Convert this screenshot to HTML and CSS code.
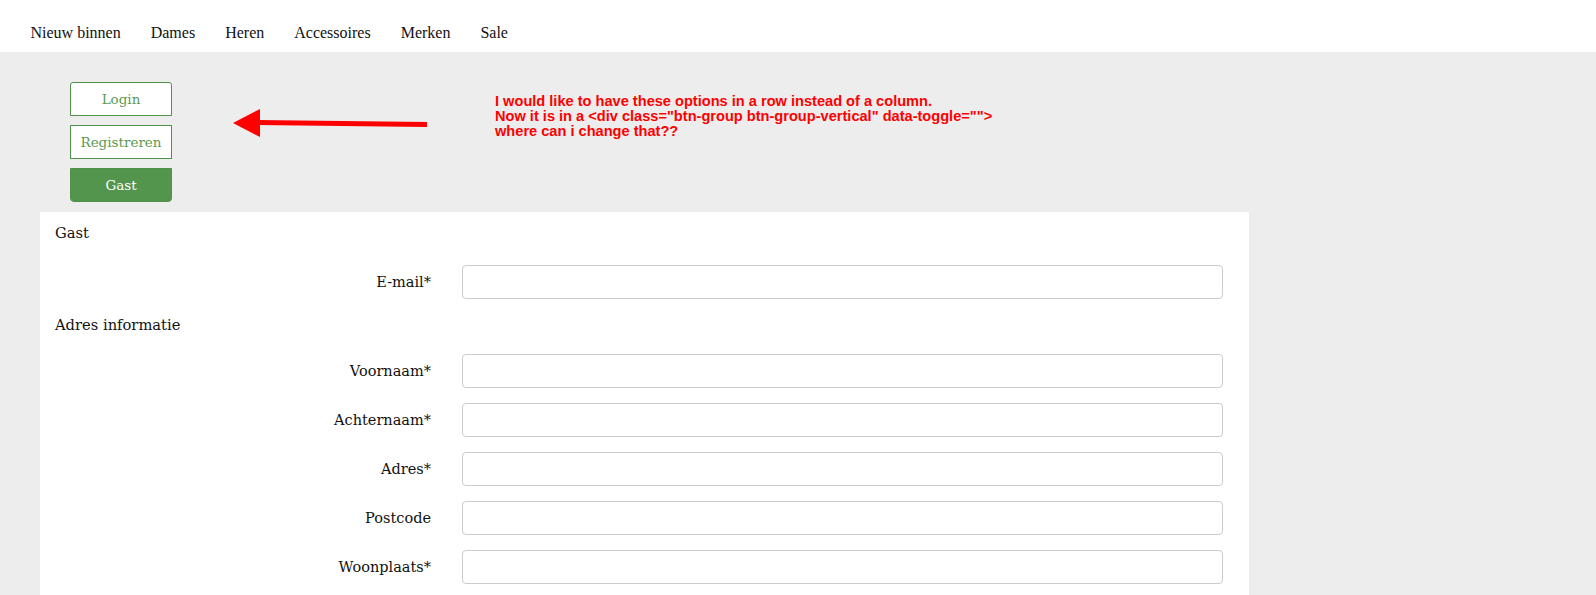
FILE: index.html
```html
<!DOCTYPE html>
<html lang="nl">
<head>
<meta charset="utf-8">
<title>Afrekenen</title>
<link rel="stylesheet" href="styles.css">
</head>
<body>
<header class="topnav">
  <a href="#">Nieuw binnen</a>
  <a href="#">Dames</a>
  <a href="#">Heren</a>
  <a href="#">Accessoires</a>
  <a href="#">Merken</a>
  <a href="#">Sale</a>
</header>
<main class="page">
  <div class="btn-group-vertical">
    <button class="btn btn-outline first">Login</button>
    <button class="btn btn-outline">Registreren</button>
    <button class="btn btn-fill last">Gast</button>
  </div>
  <svg class="arrow" width="200" height="32" viewBox="0 0 200 32">
    <polygon points="2,15 29,1 29,29" fill="#ff0000"/>
    <line x1="26" y1="14.5" x2="196" y2="16.5" stroke="#ff0000" stroke-width="5"/>
  </svg>
  <p class="note">I would like to have these options in a row instead of a column.<br>Now it is in a &lt;div class="btn-group btn-group-vertical" data-toggle=""&gt;<br>where can i change that??</p>
  <section class="panel">
    <h3 class="section-title">Gast</h3>
    <div class="form-row first-row">
      <label>E-mail*</label>
      <input type="text">
    </div>
    <h3 class="section-title second">Adres informatie</h3>
    <div class="form-row">
      <label>Voornaam*</label>
      <input type="text">
    </div>
    <div class="form-row">
      <label>Achternaam*</label>
      <input type="text">
    </div>
    <div class="form-row">
      <label>Adres*</label>
      <input type="text">
    </div>
    <div class="form-row">
      <label>Postcode</label>
      <input type="text">
    </div>
    <div class="form-row">
      <label>Woonplaats*</label>
      <input type="text">
    </div>
  </section>
</main>
</body>
</html>
```

FILE: styles.css
```css
* { box-sizing: border-box; }
html, body { margin: 0; padding: 0; }
body {
  background: #ededed;
  font-family: "DejaVu Serif", serif;
  color: #1a1a1a;
  height: 595px;
  overflow: hidden;
}
.topnav {
  background: #fff;
  height: 52px;
  display: flex;
  align-items: center;
  gap: 30px;
  padding: 13px 0 0 30.5px;
  font-family: "Liberation Serif", serif;
  font-size: 16px;
}
.topnav a { color: #111; text-decoration: none; }
.page {
  position: relative;
  padding-top: 30px;
}
.btn-group-vertical {
  margin-left: 70px;
  width: 102px;
  display: flex;
  flex-direction: column;
  gap: 9px;
}
.btn {
  height: 34px;
  font-family: "DejaVu Serif", serif;
  font-size: 13.5px;
  border: 1px solid #4e9249;
  border-radius: 0;
  padding: 0;
  cursor: pointer;
}
.btn-outline { background: #fff; color: #5c9a52; }
.btn-fill { background: #53954d; color: #fff; }
.btn.first { border-radius: 3px 3px 0 0; }
.btn.last { border-radius: 0 0 4px 4px; }
.arrow {
  position: absolute;
  left: 231px;
  top: 56px;
}
.note {
  position: absolute;
  left: 495px;
  top: 42px;
  margin: 0;
  font-family: "Liberation Sans", Arial, sans-serif;
  font-weight: bold;
  font-size: 14.6px;
  line-height: 15px;
  color: #ff0000;
}
.panel {
  background: #fff;
  margin: 10px 0 0 40px;
  width: 1209px;
  padding: 10px 26px 20px 15px;
  min-height: 400px;
}
.section-title {
  margin: 0;
  font-weight: normal;
  font-size: 14.7px;
  line-height: 22px;
  color: #111;
}
.section-title.second { margin: 14px 0 18px; }
.form-row {
  display: grid;
  grid-template-columns: 376px 1fr;
  column-gap: 31px;
  align-items: center;
  margin-bottom: 15px;
}
.form-row.first-row { margin-top: 21px; }
.form-row label {
  text-align: right;
  font-size: 14.5px;
  color: #111;
}
.form-row input {
  height: 34px;
  border: 1px solid #cccccc;
  border-radius: 4px;
  background: #fff;
  width: 100%;
}
```
